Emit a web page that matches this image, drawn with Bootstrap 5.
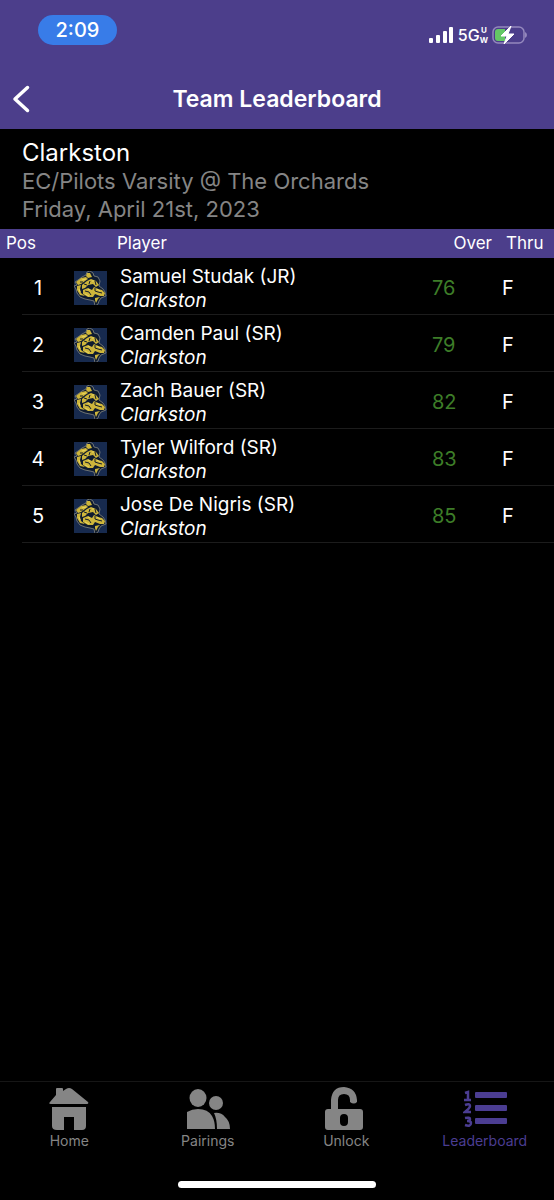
<!DOCTYPE html>
<html lang="en">
<head>
<meta charset="utf-8">
<meta name="viewport" content="width=device-width, initial-scale=1">
<title>Team Leaderboard</title>
<link href="https://cdn.jsdelivr.net/npm/bootstrap@5.3.0/dist/css/bootstrap.min.css" rel="stylesheet">
<style>
  :root { --brand: #4c3e8b; --muted: #858585; }
  body { background: #000; color: #fff; font-family: Inter, "Liberation Sans", sans-serif; font-size: 20px; line-height: 24px; }
  .app-head { background: var(--brand); }
  .status-row { height: 69px; padding: 15px 27px 0 38px; }
  .status-icons { padding-top: 10px; }
  .clock { background: #387ce8; width: 79px; height: 30px; line-height: 30px; font-size: 20px; font-weight: 500; }
  .signal-text { font-size: 16px; font-weight: 500; line-height: 20px; }
  .carrier-sub { font-size: 8px; font-weight: 700; line-height: 10px; }
  .title-row { display: grid; grid-template-columns: 60px 1fr 60px; align-items: center; height: 60px; }
  .title-row h1 { font-size: 23px; line-height: 30px; font-weight: 600; }
  .back-btn { padding: 0 0 0 12px; text-align: left; line-height: 0; }
  .event-info { padding: 9px 22px 6px; font-size: 22px; line-height: 28px; color: var(--muted); }
  .event-info h2 { font-size: 24px; line-height: 29px; font-weight: 400; color: #fff; }
  .board { table-layout: fixed; border-collapse: separate; border-spacing: 0; }
  .board th { background: var(--brand); font-size: 17px; font-weight: 400; height: 29px; line-height: 24px; padding: 0 0 2px; }
  .board th.pos-head { padding-left: 6px; }
  .board th.thru-head { padding-left: 14px; }
  .board td { height: 57px; padding: 4px 0 0; border-bottom: 1px solid #1c1c1c; vertical-align: middle; }
  .board td.inset { border-bottom-color: transparent; }
  .board td.player { font-size: 19px; padding: 6px 0 0 3px; }
  .board td.score, .board td.thru { padding-left: 10px; }
  .board td.score { color: #3d7d28; }
  .team-logo { width: 33px; height: 34px; display: block; margin-left: 20px; }
  .tab-bar { border-top: 1px solid #161616; padding-top: 5px; height: 92px; }
  .tab-bar a { color: var(--muted); font-size: 14px; line-height: 18px; }
  .tab-bar a.active { color: #4b3d92; }
  .tab-bar svg { display: block; margin-bottom: 1px; }
  .home-area { padding: 8px 0 12px; }
  .home-bar { width: 198px; height: 7px; background: #fff; }
</style>
</head>
<body>
<svg width="0" height="0" class="position-absolute" aria-hidden="true">
  <symbol id="wolf" viewBox="0 0 33 34">
    <path fill="#172a4e" d="M0 0h33v34H0z"/>
    <path d="M1 11l3-2 4-3 4-2 1-3 3-1 3 2 1 3 4 1 2 4-1 5 4 3 2 3 1 4-5 2-2 3-1 3-3 2-1-5-4-1-5-1-5-2-3-4-1-4-2-3 3-1z" fill="#0e1b30" stroke="#85877f" stroke-width=".8"/>
    <path fill="#cdb53b" d="M13 2l3 0 2 4-4 1-2-2zM2 11l5-4 5-1 2 2-3 2-4 3-3 1zM3 15l4-1-1 4 1 4 4 3-5-1-3-5zM8 14l5-4 4-2 5 2 3 4-3 2-3-3-5 1-3 3-3 1zM9 19l5-2 4 2 2-3 4 2 4 1 3 3-1 3-4 0-5-2-2 3-5 0-5-3zM21 27l5-1-2 2-2 4-1-3z"/>
    <path fill="none" stroke="#141e2b" d="M10 13l3 1M11 20l4 1 2 3M21 17l0 3 3 1 4 1M21 10l1 4M6 11l3 0M16 10l-1 3"/>
    <path fill="none" stroke="#ead75e" d="M8 9l4-1M14 18l2 1M23 18l3 2M5 18l1 3M18 10l2 0M11 23l4 2"/>
  </symbol>
</svg>

<div class="d-flex flex-column min-vh-100">
  <header class="app-head">
    <div class="status-row d-flex justify-content-between align-items-start">
      <div class="clock rounded-pill text-center">2:09</div>
      <div class="status-icons d-flex align-items-center">
        <svg width="25" height="17" viewBox="0 0 25 17" fill="#fff" aria-hidden="true"><rect y="11" width="4" height="5" rx="1"/><rect x="7" y="8" width="4" height="8" rx="1"/><rect x="14" y="4" width="4" height="12" rx="1"/><rect x="20" y="0" width="4" height="16" rx="1"/></svg>
        <span class="signal-text ms-1">5G</span>
        <span class="carrier-sub d-flex flex-column align-items-center me-1"><span>U</span><span>W</span></span>
        <svg width="35" height="20" viewBox="0 0 35 20" aria-hidden="true"><rect x="1" y="2" width="31" height="16" rx="5" fill="none" stroke="#9488bd" stroke-width="1.5"/><path fill="#64c765" d="M6 4h7v12H6q-3 0-3-3V7q0-3 3-3z"/><path d="M33 7q2 1 2 3t-2 3z" fill="#9488bd"/><path d="M19 1L9 11h6l-3 8 10-10h-6z" fill="#fff" stroke="#fff" stroke-width="1" stroke-linejoin="round"/></svg>
      </div>
    </div>
    <div class="title-row">
      <button type="button" class="back-btn btn border-0" aria-label="Back"><svg width="19" height="28" viewBox="0 0 19 28" fill="none" stroke="#fff" stroke-width="3.5" stroke-linecap="round" stroke-linejoin="round"><path d="M15.500 2.500L3 14l12.500 11.500"/></svg></button>
      <h1 class="text-center m-0">Team Leaderboard</h1>
    </div>
  </header>

  <main class="flex-grow-1">
    <section class="event-info">
      <h2 class="m-0">Clarkston</h2>
      <div>EC/Pilots Varsity @ The Orchards</div>
      <div>Friday, April 21st, 2023</div>
    </section>
    <table class="board w-100">
      <colgroup><col style="width:22px"><col style="width:32px"><col style="width:63px"><col><col style="width:70px"><col style="width:62px"></colgroup>
      <thead>
        <tr><th colspan="2" class="pos-head">Pos</th><th></th><th>Player</th><th class="text-end">Over</th><th class="thru-head">Thru</th></tr>
      </thead>
      <tbody>
        <tr><td class="inset"></td><td class="text-center">1</td><td><svg class="team-logo" role="img" aria-label="Clarkston logo"><use href="#wolf"/></svg></td><td class="player">Samuel Studak (JR)<br><i>Clarkston</i></td><td class="score">76</td><td class="thru">F</td></tr>
        <tr><td class="inset"></td><td class="text-center">2</td><td><svg class="team-logo" role="img" aria-label="Clarkston logo"><use href="#wolf"/></svg></td><td class="player">Camden Paul (SR)<br><i>Clarkston</i></td><td class="score">79</td><td class="thru">F</td></tr>
        <tr><td class="inset"></td><td class="text-center">3</td><td><svg class="team-logo" role="img" aria-label="Clarkston logo"><use href="#wolf"/></svg></td><td class="player">Zach Bauer (SR)<br><i>Clarkston</i></td><td class="score">82</td><td class="thru">F</td></tr>
        <tr><td class="inset"></td><td class="text-center">4</td><td><svg class="team-logo" role="img" aria-label="Clarkston logo"><use href="#wolf"/></svg></td><td class="player">Tyler Wilford (SR)<br><i>Clarkston</i></td><td class="score">83</td><td class="thru">F</td></tr>
        <tr><td class="inset"></td><td class="text-center">5</td><td><svg class="team-logo" role="img" aria-label="Clarkston logo"><use href="#wolf"/></svg></td><td class="player">Jose De Nigris (SR)<br><i>Clarkston</i></td><td class="score">85</td><td class="thru">F</td></tr>
      </tbody>
    </table>
  </main>

  <footer>
    <nav class="tab-bar row g-0" aria-label="Main">
      <a href="#" class="col d-flex flex-column align-items-center text-decoration-none"><svg width="40" height="44" viewBox="0 0 40 44" fill="currentColor"><path d="M7 8V2q0-1 1-1h5q1 0 1 1v2l3-2q3-2 6 0l16 13q1 2-1 2H2q-3 0-1-2zM3 20h34v19q0 4-4 4h-8V30H15v13H8q-5 0-5-4z"/></svg>Home</a>
      <a href="#" class="col d-flex flex-column align-items-center text-decoration-none"><svg width="44" height="44" viewBox="0 0 44 44" fill="currentColor"><ellipse cx="12" cy="11" rx="8.500" ry="9"/><circle cx="30" cy="16" r="7"/><path d="M1 42V25q5-3 11-3 10 0 14 7 3 5 3 13zM28 26q7-1 11 4 5 4 5 12H31q0-10-3-16z"/></svg>Pairings</a>
      <a href="#" class="col d-flex flex-column align-items-center text-decoration-none"><svg width="44" height="44" viewBox="0 0 44 44" fill="currentColor"><path fill-rule="evenodd" d="M7 22V13Q8 0 20 0q12 1 13 13v2q-3 3-7 0v-2q0-6-6-6t-6 6v9h22q3 0 3 3v15q0 3-3 3H4q-3 0-3-3V25q0-3 3-3zm13 5q-4 0-4 4v4q0 4 4 4t4-4v-4q0-4-4-4z"/></svg>Unlock</a>
      <a href="#" aria-current="page" class="col active d-flex flex-column align-items-center text-decoration-none"><svg width="44" height="44" viewBox="0 0 44 44" fill="currentColor"><rect x="12" y="5" width="32" height="6" rx="1"/><rect x="12" y="18" width="32" height="6" rx="1"/><rect x="12" y="31" width="32" height="6" rx="1"/><path d="M2 6l3-1v8M1 13h7M2 18q5-2 5 1 0 2-5 6h6M2 31q5-1 5 1 0 2-3 2 4 0 4 2 0 4-6 2" fill="none" stroke="currentColor" stroke-width="2.500"/></svg>Leaderboard</a>
    </nav>
    <div class="home-area d-flex justify-content-center"><div class="home-bar rounded-pill"></div></div>
  </footer>
</div>
<script src="https://cdn.jsdelivr.net/npm/bootstrap@5.3.0/dist/js/bootstrap.bundle.min.js"></script>
</body>
</html>
